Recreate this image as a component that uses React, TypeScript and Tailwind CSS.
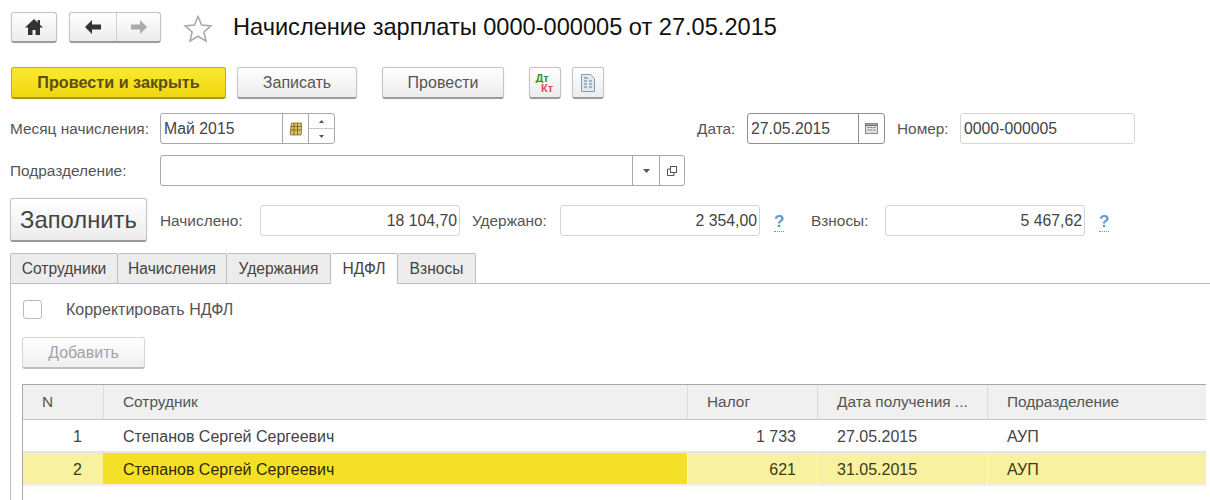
import React from "react";

const gradBtn = "flex items-center justify-center rounded-[3px] border border-[#c4c4c4] border-b-[#9a9a9a] border-b-2 bg-gradient-to-b from-white to-[#ececec] shadow-[0_0_1px_#ccc]";

function Field({ className = "", children }: { className?: string; children?: React.ReactNode }) {
  return <div className={`flex h-[31px] items-center rounded-[3px] border border-[#d5d5d5] bg-white text-[15.8px] text-[#444] ${className}`}>{children}</div>;
}

function Segment({ className = "", children }: { className?: string; children?: React.ReactNode }) {
  return <div className={`flex h-full items-center justify-center border-l border-[#a8a8a8] ${className}`}>{children}</div>;
}

function Help() {
  return <span className="border-b border-dotted border-[#5d9ccb] text-[17px] font-bold leading-[17px] text-[#5d9ccb]">?</span>;
}

function Label({ className = "", children }: { className?: string; children: React.ReactNode }) {
  return <span className={`text-[15.4px] whitespace-nowrap text-[#555] ${className}`}>{children}</span>;
}

const tabs = [
  ["Сотрудники", "w-[108px]"],
  ["Начисления", "w-[109px]"],
  ["Удержания", "w-[104px]"],
  ["НДФЛ", "w-[67px]"],
  ["Взносы", "w-[78px]"],
];

const rows = [
  ["1", "Степанов Сергей Сергеевич", "1 733", "27.05.2015", "АУП"],
  ["2", "Степанов Сергей Сергеевич", "621", "31.05.2015", "АУП"],
];

export default function App() {
  return (
    <div className="h-[500px] w-[1210px] overflow-hidden bg-white font-['Liberation_Sans',Arial,sans-serif]">
      <div className="flex h-[67px] items-start pl-[11px] pt-3">
        <div className={`${gradBtn} h-[31px] w-[46px]`}>
          <svg width="20" height="18" viewBox="0 0 20 18"><path d="M10 1 1 9.500h3V17h4.500v-5h3v5H16V9.500h3L16 6.700V2h-2.400v2.400z" fill="#333" /></svg>
        </div>
        <div className={`${gradBtn} ml-3 h-[31px] w-[92px]`}>
          <div className="flex h-full w-[46px] items-center justify-center">
            <svg width="20" height="16" viewBox="0 0 20 16"><path d="M9 1 2 8l7 7V10.400h9V5.600H9z" fill="#333" /></svg>
          </div>
          <div className="flex h-full flex-1 items-center justify-center border-l border-[#d0d0d0]">
            <svg width="20" height="16" viewBox="0 0 20 16"><path d="M11 1l7 7-7 7V10.400H2V5.600h9z" fill="#aaa" /></svg>
          </div>
        </div>
        <svg className="ml-[22px] mt-[2px]" width="30" height="29" viewBox="0 0 30 29"><path d="M15 2.500l3.600 8.600 9.300.8-7 6.100 2.100 9.100-8-4.800-8 4.800 2.100-9.100-7-6.100 9.300-.8z" fill="#fff" stroke="#a9a9a9" strokeWidth="1.6" /></svg>
        <h1 className="ml-5 whitespace-nowrap text-[23.6px] font-normal leading-[31px] text-[#111]">Начисление зарплаты 0000-000005 от 27.05.2015</h1>
      </div>

      <div className="flex h-[46px] items-start pl-[11px]">
        <div className="flex h-[32px] w-[215px] items-center justify-center rounded-[3px] border border-[#c2ab14] border-b-2 border-b-[#a8951a] bg-gradient-to-b from-[#fbe92f] to-[#f0d60c] text-[16.200px] font-bold text-[#5a4f14]">Провести и закрыть</div>
        <div className={`${gradBtn} ml-[11px] h-[32px] w-[120px] text-[16px] text-[#555]`}>Записать</div>
        <div className={`${gradBtn} ml-[25px] h-[32px] w-[122px] text-[16px] text-[#555]`}>Провести</div>
        <div className={`${gradBtn} ml-[25px] h-[32px] w-[32px] flex-col pt-[1px] text-[11px] font-bold leading-[10px]`}>
          <span className="-ml-[6px] h-[10px] overflow-hidden text-[#3f8f2c]">Дт</span>
          <span className="ml-[4px] h-[10px] overflow-hidden text-[#e2465a]">Кт</span>
        </div>
        <div className={`${gradBtn} ml-[11px] h-[32px] w-[32px]`}>
          <svg width="16" height="20" viewBox="0 0 16 20">
            <path d="M1.500 1.500h9l4 4v13h-13z" fill="#dfe9f2" stroke="#8f9aa6" />
            <path d="M4 5h4M4 8h3M9 8h3M4 11h3M9 11h3M4 14h3M9 14h3" stroke="#6d7885" strokeWidth="1.200" />
          </svg>
        </div>
      </div>

      <div className="flex h-[42px] items-start">
        <Label className="ml-[10px] w-[150px] leading-[31px]">Месяц начисления:</Label>
        <Field className="w-[175px] !border-[#a8a8a8] pl-[3px]">
          <span className="flex-1">Май 2015</span>
          <Segment className="w-[26px]">
            <svg width="14" height="16" viewBox="0 0 14 16">
              <path d="M2.500 2h10v10H12v2H1.500v-2H1z" fill="#dcc266" stroke="#7d6c2c" strokeWidth="0.800" />
              <path d="M1.500 5.500h10.500M1.500 9h10.500M5 2v12M8.500 2v12" stroke="#6f5f22" strokeWidth="0.800" />
            </svg>
          </Segment>
          <div className="flex h-full w-[26px] flex-col border-l border-[#a8a8a8]">
            <div className="flex flex-1 items-center justify-center border-b border-[#c8c8c8]">
              <svg width="5" height="3" viewBox="0 0 5 3"><path d="M2.500 0 5 3H0z" fill="#555" /></svg>
            </div>
            <div className="flex flex-1 items-center justify-center">
              <svg width="5" height="3" viewBox="0 0 5 3"><path d="M0 0h5L2.500 3z" fill="#555" /></svg>
            </div>
          </div>
        </Field>
        <Label className="ml-[362px] w-[50px] leading-[31px]">Дата:</Label>
        <Field className="w-[138px] !border-[#8f8f8f] pl-[3px]">
          <span className="flex-1">27.05.2015</span>
          <Segment className="w-[26px] !border-[#8f8f8f]">
            <svg width="13" height="11" viewBox="0 0 13 11">
              <rect x="0.500" y="0.500" width="12" height="10" fill="#e3e3e3" stroke="#8a8a8a" />
              <path d="M0.500 2.200h12" stroke="#666" strokeWidth="1.400" />
              <path d="M2.500 4.500h2M5.500 4.500h2M8.500 4.500h2M2.500 7h2M5.500 7h2M8.500 7h2" stroke="#777" />
            </svg>
          </Segment>
        </Field>
        <Label className="ml-3 w-[63px] leading-[31px]">Номер:</Label>
        <Field className="w-[175px] pl-[3px]">0000-000005</Field>
      </div>

      <div className="flex h-[43px] items-start">
        <Label className="ml-[10px] w-[150px] leading-[31px]">Подразделение:</Label>
        <Field className="w-[525px] !border-[#a8a8a8]">
          <span className="flex-1" />
          <Segment className="w-[27px]">
            <svg width="7" height="4" viewBox="0 0 7 4"><path d="M0 0h7L3.500 4z" fill="#555" /></svg>
          </Segment>
          <Segment className="w-[25px]">
            <svg width="12" height="12" viewBox="0 0 12 12" fill="none" stroke="#555"><rect x="4.500" y="1.500" width="6" height="6" /><path d="M4.500 4H1.500v6.500H8V7.500" /></svg>
          </Segment>
        </Field>
      </div>

      <div className="flex h-[55px] items-start">
        <div className={`${gradBtn} ml-[10px] h-[44px] w-[137px] text-[23.800px] text-[#444]`}>Заполнить</div>
        <Label className="ml-[13px] mt-[7px] w-[100px] leading-[31px]">Начислено:</Label>
        <Field className="mt-[7px] w-[200px] justify-end pr-[2px]">18 104,70</Field>
        <Label className="ml-3 mt-[7px] w-[88px] leading-[31px]">Удержано:</Label>
        <Field className="mt-[7px] w-[200px] justify-end pr-[2px]">2 354,00</Field>
        <div className="ml-[14px] mt-[12px] w-[37px]"><Help /></div>
        <Label className="mt-[7px] w-[74px] leading-[31px]">Взносы:</Label>
        <Field className="mt-[7px] w-[200px] justify-end pr-[2px]">5 467,62</Field>
        <div className="ml-[14px] mt-[12px]"><Help /></div>
      </div>

      <div className="ml-[10px] flex h-[31px] items-stretch">
        {tabs.map(([name, w]) => (
          <div key={name} className={`${w} flex items-center justify-center rounded-t-[2px] border border-l-0 first:border-l border-[#bdbdbd] text-[15.600px] text-[#444] ${name === "НДФЛ" ? "border-b-white bg-white" : "bg-[#ececec]"}`}>{name}</div>
        ))}
      </div>

      <div className="-mt-px ml-[10px] flex h-[217px] flex-col border-l border-t border-[#bdbdbd] pl-[11px]">
        <div className="mt-[16px] flex h-[19px] items-center">
          <div className="ml-[1px] h-[19px] w-[19px] rounded-[3px] border border-[#bbb] bg-white" />
          <Label className="ml-[24px] !text-[16px]">Корректировать НДФЛ</Label>
        </div>
        <div className="mt-[18px] flex h-[32px] w-[123px] items-center justify-center rounded-[3px] border border-[#d5d5d5] border-b-2 border-b-[#bdbdbd] bg-gradient-to-b from-white to-[#efefef] text-[16px] text-[#a3a3a3]">Добавить</div>

        <div className="mt-[15px] mr-[4px] flex-1 border-l border-t border-[#a8a8a8] text-[16px] text-[#444]">
          <div className="grid h-[35px] grid-cols-[80px_584px_130px_170px_1fr] items-stretch border-b border-[#c4c4c4] bg-[#f0f0f0] text-[15.400px] text-[#555]">
            <div className="flex items-center pl-[19px]">N</div>
            <div className="flex items-center border-l border-[#dcdcdc] pl-[19px]">Сотрудник</div>
            <div className="flex items-center border-l border-[#dcdcdc] pl-[19px]">Налог</div>
            <div className="flex items-center border-l border-[#dcdcdc] pl-[19px]">Дата получения ...</div>
            <div className="flex items-center border-l border-[#dcdcdc] pl-[19px]">Подразделение</div>
          </div>
          {rows.map((r, i) => {
            const sel = i === 1;
            const sep = sel ? "border-white/50" : "border-transparent";
            return (
              <div key={r[0]} className={`grid h-[33px] grid-cols-[80px_584px_130px_170px_1fr] items-stretch border-b-2 ${sel ? "border-[#f0f0e4] bg-[#f8f1a0] text-[#3f3a10]" : "border-[#e6e6e6]"}`}>
                <div className="flex items-center justify-end pr-[21px] pt-[3px]">{r[0]}</div>
                <div className={`flex items-center pl-5 pt-[3px] ${sel ? "bg-[#f4e026] text-[#2e2a05]" : ""}`}>{r[1]}</div>
                <div className={`flex items-center justify-end border-l pr-[21px] pt-[3px] ${sep}`}>{r[2]}</div>
                <div className={`flex items-center border-l pl-[19px] pt-[3px] ${sep}`}>{r[3]}</div>
                <div className={`flex items-center border-l pl-[19px] pt-[3px] ${sep}`}>{r[4]}</div>
              </div>
            );
          })}
        </div>
      </div>
    </div>
  );
}
